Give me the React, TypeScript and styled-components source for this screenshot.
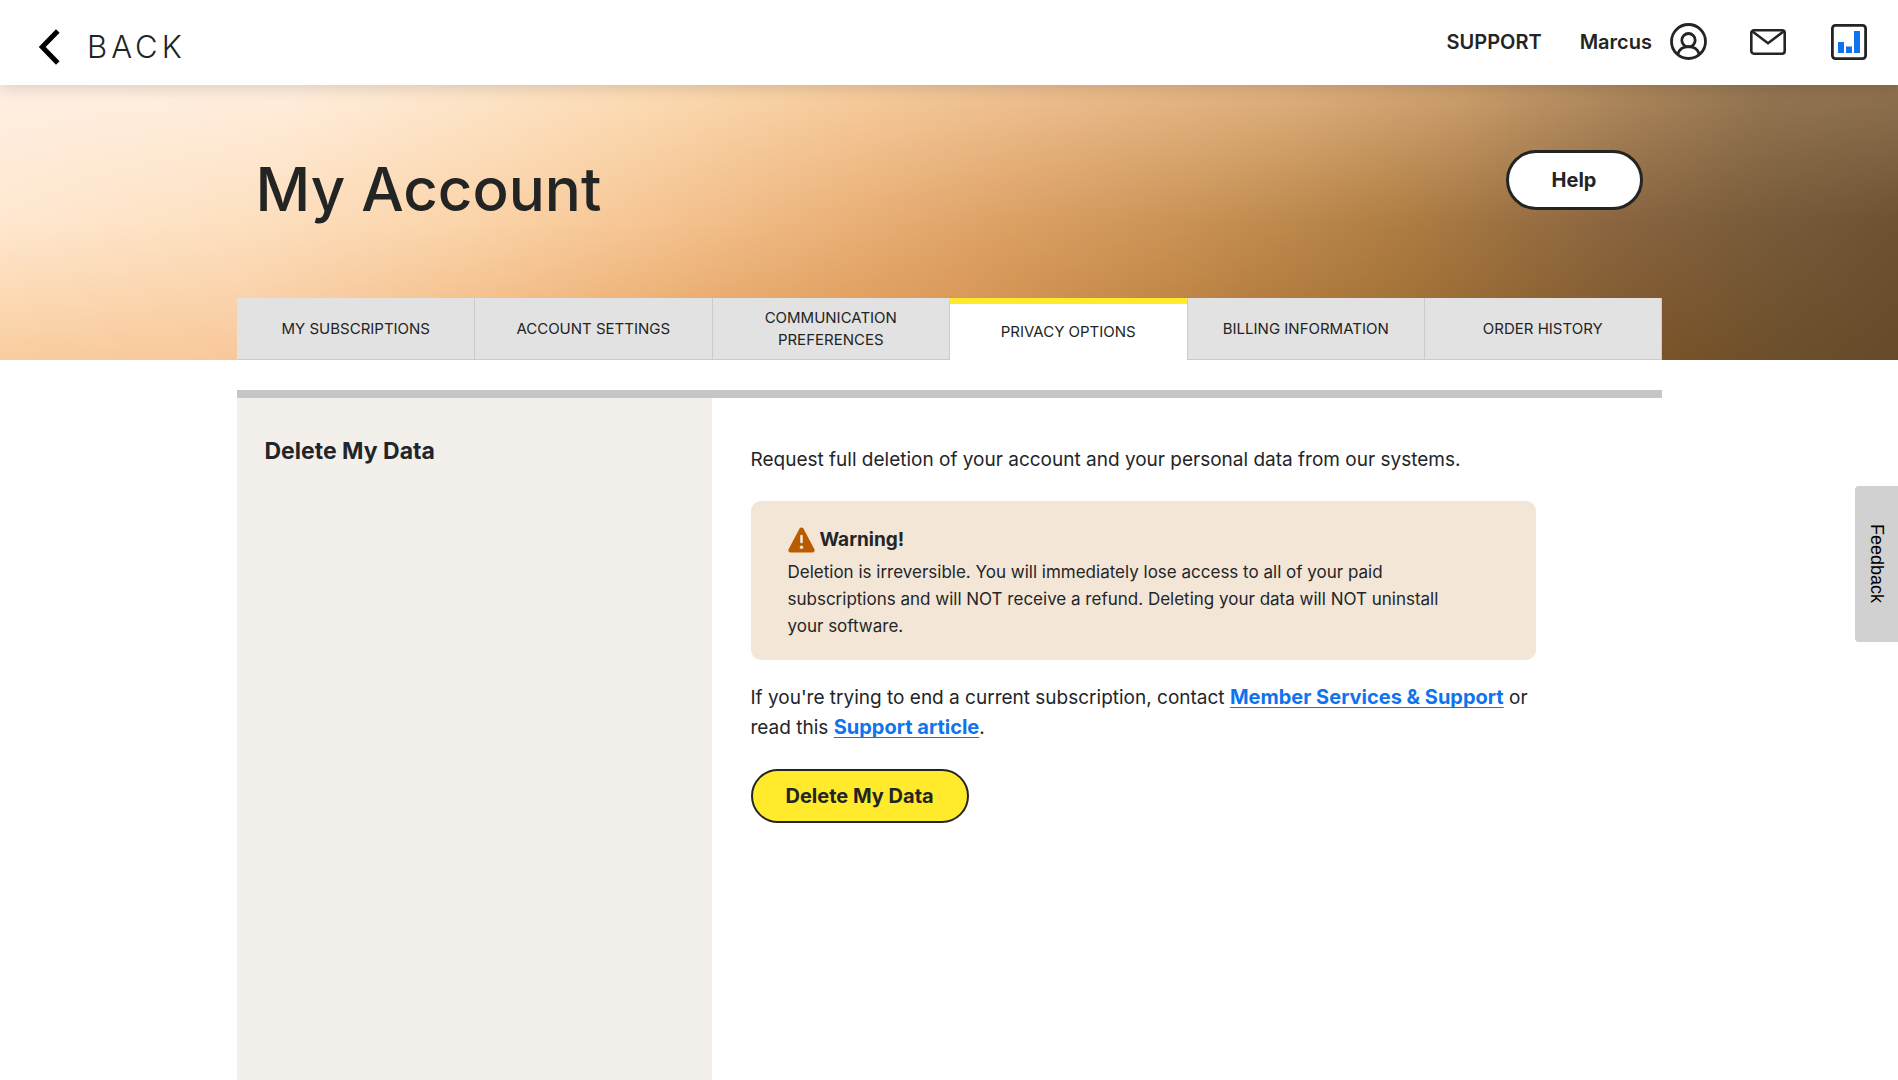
import React from 'react';
import styled, { createGlobalStyle, css } from 'styled-components';

const ink = '#222529';
const dark = '#232424';
const blue = '#0f73ee';
const yellow = '#ffeb2b';

const GlobalStyle = createGlobalStyle`
  *, *::before, *::after { box-sizing: border-box; }
  html, body, #root { margin: 0; min-height: 100vh; }
  body {
    background: #fff;
    color: ${ink};
    font-family: Inter, "Liberation Sans", sans-serif;
    font-size: 19px;
    line-height: 30px;
  }
  button { font: inherit; color: inherit; cursor: pointer; }
  h1, h2, p, ul { margin: 0; padding: 0; }
`;

const Page = styled.div`
  display: flex;
  flex-direction: column;
  min-height: 100vh;
`;

const Header = styled.header`
  position: relative;
  z-index: 2;
  display: flex;
  align-items: center;
  justify-content: space-between;
  height: 85px;
  padding: 0 31px 0 39px;
  background: #fff;
  box-shadow: 0 4px 14px rgba(0, 0, 0, 0.13);
`;

const BackLink = styled.a`
  display: flex;
  align-items: center;
  gap: 27px;
  padding-top: 9px;
  color: ${dark};
  font-size: 31px;
  font-weight: 300;
  line-height: 36px;
  letter-spacing: 4px;
  text-decoration: none;
`;

const HeaderNav = styled.nav`
  display: flex;
  align-items: center;
  padding-bottom: 2px;
  color: ${dark};
  font-size: 20px;
  font-weight: 600;
`;

const HeaderLink = styled.a<{ $gap: number }>`
  display: flex;
  align-items: center;
  gap: 18px;
  margin-left: ${(p) => p.$gap}px;
  color: inherit;
  text-decoration: none;
`;

const Banner = styled.section`
  position: relative;
  isolation: isolate;
  background: linear-gradient(90deg,
    #ffe8d0 0%, #fde0c0 13%, #fbd4a9 25%, #f6c593 34%, #eab077 45%, #dda165 53%,
    #c99254 63%, #ae7d42 74%, #8a6540 85%, #765a39 94%, #6d5233 100%);

  &::before, &::after {
    content: '';
    position: absolute;
    inset: 0;
    z-index: -1;
  }
  &::before {
    background: linear-gradient(90deg,
      #ffefe3 0%, #ffeede 15%, #fde4c8 26%, #fcdcb5 34%, #f7cd9f 45%, #ebbd8e 57%,
      #dfb17f 68%, #cda06f 77%, #ad875c 86%, #957753 93%, #8f7250 100%);
    mask-image: linear-gradient(180deg, #000 0%, transparent 50%);
  }
  &::after {
    background: linear-gradient(90deg,
      #f8cd9d 0%, #f8c799 13%, #eeb076 27%, #e3a05d 37%, #d4914d 50%, #b5793a 63%,
      #9a6a30 74%, #7a5328 87%, #6c4f2c 94%, #664a2a 100%);
    mask-image: linear-gradient(180deg, transparent 50%, #000 100%);
  }
`;

const Container = styled.div`
  width: 100%;
  max-width: 1425px;
  margin: 0 auto;
`;

const TitleRow = styled.div`
  display: flex;
  justify-content: space-between;
  align-items: flex-start;
  height: 213px;
  padding: 65px 19px 0;
`;

const Title = styled.h1`
  color: ${dark};
  font-size: 60px;
  font-weight: 500;
  line-height: 78px;
`;

const PillButton = styled.button<{ $primary?: boolean }>`
  display: inline-flex;
  align-items: center;
  justify-content: center;
  height: 60px;
  min-width: 137px;
  padding: 0 33px;
  border: 3px solid ${dark};
  border-radius: 30px;
  background: #fff;
  color: ${dark};
  font-size: 20px;
  font-weight: 700;
  ${(p) => p.$primary && css`
    height: 54px;
    border-width: 2px;
    background: ${yellow};
  `}
`;

const Tabs = styled.nav`
  display: grid;
  grid-template-columns: repeat(6, 1fr);
  height: 62px;
`;

const Tab = styled.a<{ $active?: boolean }>`
  display: flex;
  align-items: center;
  justify-content: center;
  padding: 0 30px;
  border-left: 1px solid #cbcbcb;
  border-bottom: 1px solid #cbcbcb;
  background: #e2e2e2;
  color: ${dark};
  font-size: 15px;
  line-height: 22px;
  text-align: center;
  text-decoration: none;
  &:first-child { border-left-color: #e2e2e2; }
  &:last-child { border-right: 1px solid #cbcbcb; }
  ${(p) => p.$active && css`
    border-top: 6px solid ${yellow};
    border-bottom: 0;
    background: #fff;
  `}
`;

const Body = styled(Container)`
  flex: 1;
  display: grid;
  grid-template-columns: 1fr 2fr;
  margin-top: 30px;
  border-top: 8px solid #c5c6c8;
`;

const Sidebar = styled.aside`
  padding: 38px 28px;
  background: #f3f0ec;
`;

const SideHeading = styled.h2`
  font-size: 23px;
  font-weight: 700;
  line-height: 30px;
`;

const Content = styled.main`
  display: flex;
  flex-direction: column;
  align-items: flex-start;
  max-width: 824px;
  padding: 47px 0 40px 39px;
`;

const Paragraph = styled.p`
  margin-bottom: 26px;
`;

const Alert = styled.div`
  width: 100%;
  margin-bottom: 23px;
  padding: 24px 84px 20px 37px;
  border-radius: 10px;
  background: #f3e6d6;
  font-size: 17px;
  line-height: 27px;
`;

const AlertTitle = styled.h2`
  display: flex;
  align-items: center;
  gap: 5px;
  margin-bottom: 4px;
  font-size: 19px;
  font-weight: 700;
  line-height: 30px;
`;

const TextLink = styled.a`
  color: ${blue};
  font-size: 20px;
  font-weight: 700;
  line-height: 24px;
  text-decoration: underline;
  text-decoration-thickness: 1px;
  text-decoration-skip-ink: none;
  text-underline-offset: 3px;
`;

const FeedbackTab = styled.button`
  position: fixed;
  top: 486px;
  right: 0;
  width: 43px;
  height: 156px;
  padding: 0;
  border: 0;
  border-radius: 4px 0 0 4px;
  background: #d1d1d1;
  color: #000;
  font-family: "Liberation Sans", Arial, sans-serif;
  font-size: 18px;
  line-height: 43px;
  writing-mode: vertical-rl;
`;

const tabs = [
  'MY SUBSCRIPTIONS',
  'ACCOUNT SETTINGS',
  'COMMUNICATION PREFERENCES',
  'PRIVACY OPTIONS',
  'BILLING INFORMATION',
  'ORDER HISTORY',
];

const ChevronIcon = () => (
  <svg width="21" height="36" viewBox="0 0 21 36" fill="none" aria-hidden="true">
    <path d="M18.800 2 3.200 18 18.800 34" stroke="#000" strokeWidth="5" />
  </svg>
);

const UserIcon = () => (
  <svg width="37" height="37" viewBox="0 0 37 37" fill="none" stroke={dark} strokeWidth="2.800" aria-hidden="true">
    <circle cx="18.500" cy="18.500" r="17" />
    <circle cx="18.500" cy="17.200" r="6.700" />
    <path d="M7.800 31c1.600-4.800 5.600-7.300 10.700-7.300s9.100 2.500 10.700 7.300" />
  </svg>
);

const MailIcon = () => (
  <svg width="36" height="26" viewBox="0 0 36 26" fill="none" stroke={dark} strokeWidth="2.600" aria-hidden="true">
    <rect x="1.300" y="1.300" width="33.400" height="23.400" rx="2.600" />
    <path d="M2.500 2.500 18 14.200 33.500 2.500" />
  </svg>
);

const ChartIcon = () => (
  <svg width="36" height="36" viewBox="0 0 36 36" fill="none" aria-hidden="true">
    <rect x="1.400" y="1.400" width="33.200" height="33.200" rx="3" stroke={dark} strokeWidth="2.800" />
    <path fill={blue} d="M7 18h6v11H7zM15 22.500h6V29h-6zM23 7h6v22h-6z" />
  </svg>
);

const WarningIcon = () => (
  <svg width="27" height="26" viewBox="0 0 27 26" aria-hidden="true">
    <path d="M11.600 1.500a2.200 2.200 0 0 1 3.800 0l11 20.800a2.200 2.200 0 0 1-1.900 3.200h-22a2.200 2.200 0 0 1-1.900-3.200z" fill="#b95c00" />
    <path d="M13.500 9v6" stroke="#f3e6d6" strokeWidth="2.600" strokeLinecap="round" />
    <circle cx="13.500" cy="20.300" r="1.700" fill="#f3e6d6" />
  </svg>
);

export default function App() {
  return (
    <Page>
      <GlobalStyle />
      <Header>
        <BackLink href="#back">
          <ChevronIcon />
          BACK
        </BackLink>
        <HeaderNav aria-label="Account">
          <HeaderLink href="#support" $gap={0}>SUPPORT</HeaderLink>
          <HeaderLink href="#profile" $gap={38}>
            Marcus
            <UserIcon />
          </HeaderLink>
          <HeaderLink href="#messages" aria-label="Messages" $gap={43}><MailIcon /></HeaderLink>
          <HeaderLink href="#reports" aria-label="Reports" $gap={45}><ChartIcon /></HeaderLink>
        </HeaderNav>
      </Header>

      <Banner>
        <Container>
          <TitleRow>
            <Title>My Account</Title>
            <PillButton type="button">Help</PillButton>
          </TitleRow>
          <Tabs aria-label="Account sections">
            {tabs.map((name) => {
              const active = name === 'PRIVACY OPTIONS';
              return (
                <Tab key={name} href="#section" $active={active} aria-current={active ? 'page' : undefined}>
                  {name}
                </Tab>
              );
            })}
          </Tabs>
        </Container>
      </Banner>

      <Body>
        <Sidebar>
          <SideHeading>Delete My Data</SideHeading>
        </Sidebar>
        <Content>
          <Paragraph>Request full deletion of your account and your personal data from our systems.</Paragraph>
          <Alert role="note">
            <AlertTitle>
              <WarningIcon />
              Warning!
            </AlertTitle>
            <p>
              Deletion is irreversible. You will immediately lose access to all of your paid
              subscriptions and will NOT receive a refund. Deleting your data will NOT uninstall
              your software.
            </p>
          </Alert>
          <Paragraph>
            If you're trying to end a current subscription, contact{' '}
            <TextLink href="#member-services">Member Services &amp; Support</TextLink> or read this{' '}
            <TextLink href="#support-article">Support article</TextLink>.
          </Paragraph>
          <PillButton type="button" $primary>Delete My Data</PillButton>
        </Content>
      </Body>

      <FeedbackTab type="button">Feedback</FeedbackTab>
    </Page>
  );
}
